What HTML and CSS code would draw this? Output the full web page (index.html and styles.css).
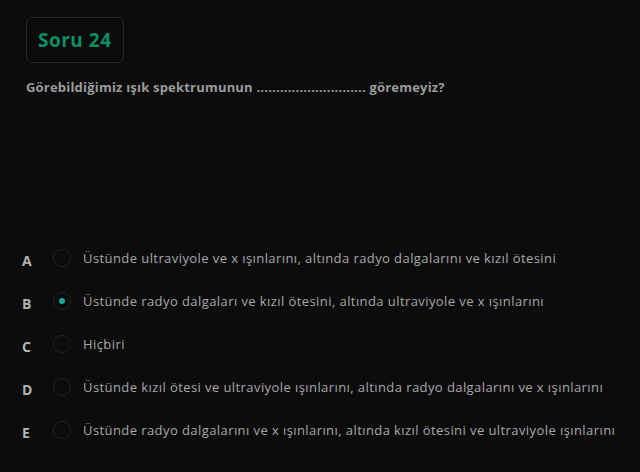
FILE: index.html
```html
<!DOCTYPE html>
<html lang="tr">
<head>
<meta charset="utf-8">
<link rel="stylesheet" href="styles.css">
</head>
<body>
<main class="quiz">
  <div class="badge">Soru 24</div>
  <p class="question">Görebildiğimiz ışık spektrumunun ............................ göremeyiz?</p>
  <ul class="options">
    <li class="option"><span class="letter">A</span><span class="radio"></span><span class="text">Üstünde ultraviyole ve x ışınlarını, altında radyo dalgalarını ve kızıl ötesini</span></li>
    <li class="option"><span class="letter">B</span><span class="radio checked"></span><span class="text">Üstünde radyo dalgaları ve kızıl ötesini, altında ultraviyole ve x ışınlarını</span></li>
    <li class="option"><span class="letter">C</span><span class="radio"></span><span class="text">Hiçbiri</span></li>
    <li class="option"><span class="letter">D</span><span class="radio"></span><span class="text">Üstünde kızıl ötesi ve ultraviyole ışınlarını, altında radyo dalgalarını ve x ışınlarını</span></li>
    <li class="option"><span class="letter">E</span><span class="radio"></span><span class="text">Üstünde radyo dalgalarını ve x ışınlarını, altında kızıl ötesini ve ultraviyole ışınlarını</span></li>
  </ul>
</main>
</body>
</html>
```
FILE: styles.css
```css
html, body {
  margin: 0;
  padding: 0;
  background: #0c0c0c;
}
body {
  font-family: "Open Sans", "Noto Sans", sans-serif;
}
.quiz {
  padding: 17px 0 0 22px;
}
.badge {
  display: inline-block;
  margin-left: 4px;
  border: 1px solid #262626;
  border-radius: 6px;
  padding: 9px 11px;
  font-size: 19px;
  font-weight: 700;
  letter-spacing: 0.5px;
  color: #0f8f62;
  line-height: 26px;
}
.question {
  margin: 14px 0 0 4px;
  font-size: 13px;
  font-weight: 700;
  letter-spacing: 0.2px;
  color: #9b9b9b;
  line-height: 20px;
}
.options {
  list-style: none;
  margin: 152px 0 0 0;
  padding: 0;
  display: flex;
  flex-direction: column;
  gap: 25px;
}
.option {
  display: flex;
  align-items: center;
  height: 18px;
}
.letter {
  flex: none;
  width: 31px;
  font-size: 14px;
  font-weight: 700;
  color: #b4b4b4;
  position: relative;
  top: 2px;
}
.radio {
  width: 16px;
  height: 16px;
  border: 1px solid #222;
  border-radius: 50%;
  display: flex;
  align-items: center;
  justify-content: center;
  flex: none;
}
.radio.checked::after {
  content: "";
  width: 6px;
  height: 6px;
  border-radius: 50%;
  background: #13a89c;
}
.text {
  margin-left: 12px;
  font-size: 13px;
  letter-spacing: 0.42px;
  color: #a8a8a8;
  white-space: nowrap;
}
```
